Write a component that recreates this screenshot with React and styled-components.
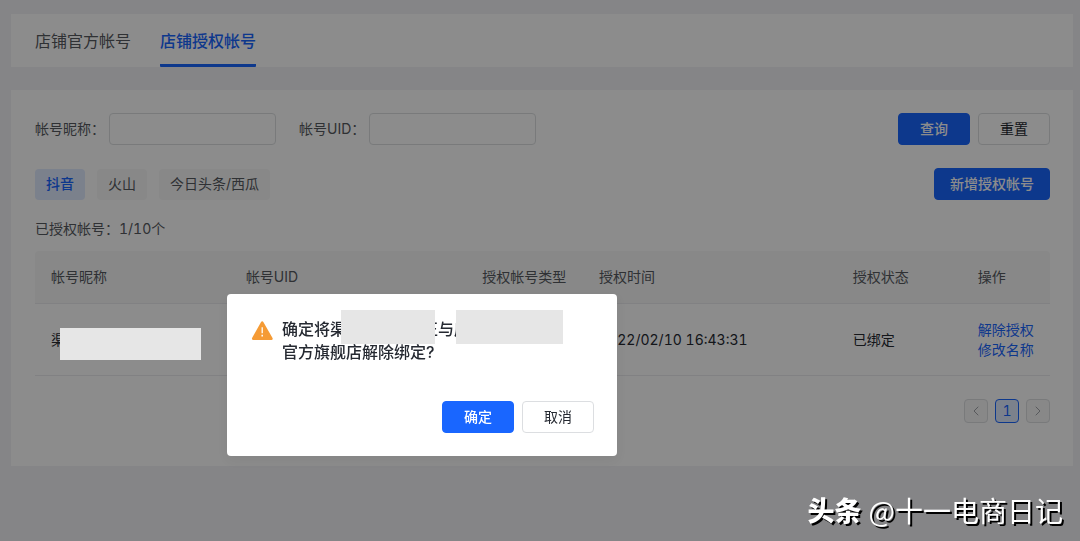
import { ChevronLeft, ChevronRight } from "lucide-react";
import styled, { createGlobalStyle, css, ThemeProvider } from "styled-components";

const theme = {
  bg: "#f2f3f6",
  card: "#ffffff",
  soft: "#f7f8f8",
  border: "#dcdee1",
  line: "#ebecef",
  primary: "#1966ff",
  primarySoft: "#e0ebff",
  text: "#252931",
  textSoft: "#565960",
  mask: "#e6e6e6",
};

const GlobalStyle = createGlobalStyle`
  * {
    box-sizing: border-box;
  }
  body {
    margin: 0;
    background-color: ${theme.bg};
    color: ${theme.text};
    font-family: Inter, "Noto Sans CJK SC", sans-serif;
    font-size: 14px;
    font-variant-numeric: tabular-nums;
    line-height: 20px;
  }
  button, input {
    font: inherit;
    color: inherit;
  }
`;

const Page = styled.main`
  display: flex;
  flex-direction: column;
  gap: 23px;
  padding: 14px 7px 24px 11px;
`;

const Tabs = styled.nav`
  display: flex;
  gap: 29px;
  padding: 0 24px;
  background-color: ${({ theme }) => theme.card};
`;

const Tab = styled.button`
  padding: 15px 0 11px;
  border: none;
  border-bottom: 3px solid transparent;
  background-color: transparent;
  color: ${({ theme }) => theme.textSoft};
  font-size: 16px;
  line-height: 24px;
  cursor: pointer;
  ${({ $active, theme }) =>
    $active &&
    css`
      color: ${theme.primary};
      border-bottom-color: ${theme.primary};
      border-radius: 1px;
      font-weight: 500;
    `}
`;

const Card = styled.section`
  padding: 23px 23px 43px 24px;
  background-color: ${({ theme }) => theme.card};
`;

const Row = styled.div`
  display: flex;
  align-items: center;
  justify-content: space-between;
`;

const Filters = styled.form`
  display: flex;
  align-items: center;
  gap: 23px;
`;

const Field = styled.div`
  display: flex;
  align-items: center;
  gap: 4px;
`;

const Label = styled.label`
  color: ${({ theme }) => theme.textSoft};
`;

const Input = styled.input`
  width: 167px;
  height: 32px;
  padding: 0 12px;
  border: 1px solid ${({ theme }) => theme.border};
  border-radius: 4px;
  outline: none;
  background-color: transparent;
`;

const Actions = styled.div`
  display: flex;
  justify-content: flex-end;
  gap: 8px;
`;

const Button = styled.button`
  min-width: 72px;
  height: 32px;
  padding: 0 15px;
  border: 1px solid ${({ theme }) => theme.border};
  border-radius: 4px;
  background-color: ${({ theme }) => theme.card};
  cursor: pointer;
  ${({ $primary, theme }) =>
    $primary &&
    css`
      border-color: ${theme.primary};
      background-color: ${theme.primary};
      color: #fff;
      font-weight: 500;
    `}
`;

const Toolbar = styled(Row)`
  margin-top: 23px;
`;

const Tags = styled.div`
  display: flex;
  gap: 12px;
`;

const Tag = styled.button`
  height: 31px;
  padding: 0 11px;
  border: none;
  border-radius: 4px;
  background-color: ${({ theme }) => theme.soft};
  color: ${({ theme }) => theme.textSoft};
  cursor: pointer;
  ${({ $active, theme }) =>
    $active &&
    css`
      background-color: ${theme.primarySoft};
      color: ${theme.primary};
      font-weight: 500;
    `}
`;

const Count = styled.p`
  margin: 19px 0 12px;
  color: ${({ theme }) => theme.textSoft};
`;

const Table = styled.table`
  width: 100%;
  table-layout: fixed;
  border-collapse: separate;
  border-spacing: 0;
`;

const Th = styled.th`
  width: ${({ $width }) => $width};
  height: 53px;
  padding: 0 16px;
  border-bottom: 1px solid ${({ theme }) => theme.line};
  background-color: ${({ theme }) => theme.soft};
  color: ${({ theme }) => theme.textSoft};
  font-weight: 400;
  text-align: left;
  white-space: nowrap;
  &:first-child {
    border-top-left-radius: 4px;
  }
  &:last-child {
    border-top-right-radius: 4px;
  }
`;

const Td = styled.td`
  height: 72px;
  padding: 0 16px;
  border-bottom: 1px solid ${({ theme }) => theme.line};
  white-space: nowrap;
`;

const Link = styled.a`
  display: block;
  color: ${({ theme }) => theme.primary};
  text-decoration: none;
`;

const Masked = styled.div`
  display: flex;
  align-items: center;
`;

const NameMask = styled.span`
  position: relative;
  z-index: 2;
  width: 141px;
  height: 32px;
  margin: 8px 0 0 -5px;
  background-color: ${({ theme }) => theme.mask};
`;

const Pagination = styled.nav`
  display: flex;
  justify-content: flex-end;
  gap: 7px;
  margin-top: 23px;
`;

const PageButton = styled.button`
  display: flex;
  align-items: center;
  justify-content: center;
  width: 24px;
  height: 24px;
  padding: 0;
  border: 1px solid ${({ theme }) => theme.border};
  border-radius: 4px;
  background-color: ${({ theme }) => theme.soft};
  color: #a0a3a8;
  ${({ $active, theme }) =>
    $active &&
    css`
      border-color: ${theme.primary};
      background-color: ${theme.primarySoft};
      color: ${theme.primary};
    `}
`;

const Overlay = styled.div`
  position: fixed;
  inset: 0;
  z-index: 1;
  background-color: rgba(0, 0, 0, 0.45);
`;

const Dialog = styled.div`
  position: absolute;
  top: 294px;
  left: 227px;
  z-index: 3;
  width: 390px;
  padding: 24px 23px 23px 24px;
  border-radius: 4px;
  background-color: ${({ theme }) => theme.card};
  box-shadow: 0 4px 12px rgba(0, 0, 0, 0.05);
`;

const DialogBody = styled.div`
  display: flex;
  gap: 8px;
  margin-bottom: 37px;
`;

const WarningIcon = styled.svg`
  flex: none;
  width: 23px;
  height: 23px;
  margin-top: 1px;
`;

const Title = styled.h2`
  margin: 0;
  font-size: 16px;
  font-weight: 500;
  line-height: 23px;
`;

const TitleLine = styled.span`
  display: flex;
  align-items: center;
  height: 23px;
  white-space: nowrap;
`;

const TitleMask = styled.span`
  position: relative;
  flex: none;
  width: ${({ $width }) => $width};
  height: 34px;
  margin: ${({ $margin }) => $margin};
  background-color: ${({ theme }) => theme.mask};
`;

const Watermark = styled.div`
  position: fixed;
  right: 17px;
  bottom: 11px;
  z-index: 4;
  display: flex;
  align-items: center;
  gap: 7px;
  color: #fff;
  font-family: "Noto Sans CJK SC", sans-serif;
  font-size: 28px;
  line-height: 40px;
  text-shadow: 2px 2px 0 #000;
`;

const Brand = styled.strong`
  font-size: 27px;
  font-weight: 900;
`;

const columns = [
  ["帐号昵称", "19.2%"],
  ["帐号UID", "23.3%"],
  ["授权帐号类型", "11.5%"],
  ["授权时间", "25%"],
  ["授权状态", "12.3%"],
  ["操作", "8.7%"],
];

function AccountTable() {
  return (
    <Table>
      <thead>
        <tr>
          {columns.map(([name, width]) => (
            <Th key={name} $width={width}>
              {name}
            </Th>
          ))}
        </tr>
      </thead>
      <tbody>
        <tr>
          <Td>
            <Masked>
              渠<NameMask />
            </Masked>
          </Td>
          <Td />
          <Td />
          <Td>2022/02/10 16:43:31</Td>
          <Td>已绑定</Td>
          <Td>
            <Link href="#unbind">解除授权</Link>
            <Link href="#rename">修改名称</Link>
          </Td>
        </tr>
      </tbody>
    </Table>
  );
}

function ConfirmDialog() {
  return (
    <Dialog role="dialog" aria-modal="true" aria-labelledby="confirm-title">
      <DialogBody>
        <WarningIcon viewBox="0 0 23 23" aria-hidden="true">
          <path
            d="M11.2 3.6 2.2 19.7h18.2Z"
            fill="#f59b35"
            stroke="#f59b35"
            strokeWidth="2.6"
            strokeLinejoin="round"
          />
          <path d="M11.2 8.2v6" stroke="#fff" strokeWidth="1.3" />
          <path d="M11.2 15.8v1.6" stroke="#fff" strokeWidth="1.5" />
        </WarningIcon>
        <Title id="confirm-title">
          <TitleLine>
            确定将渠
            <TitleMask $width="94px" $margin="0 -13px 6px -5px" />
            正与店
            <TitleMask $width="107px" $margin="0 0 6px -14px" />
          </TitleLine>
          官方旗舰店解除绑定?
        </Title>
      </DialogBody>
      <Actions>
        <Button type="button" $primary>
          确定
        </Button>
        <Button type="button">取消</Button>
      </Actions>
    </Dialog>
  );
}

function App() {
  return (
    <ThemeProvider theme={theme}>
      <GlobalStyle />
      <Page>
        <Tabs>
          <Tab type="button">店铺官方帐号</Tab>
          <Tab type="button" $active>
            店铺授权帐号
          </Tab>
        </Tabs>
        <Card>
          <Row>
            <Filters id="filters">
              <Field>
                <Label htmlFor="nickname">帐号昵称：</Label>
                <Input id="nickname" type="text" />
              </Field>
              <Field>
                <Label htmlFor="uid">帐号UID：</Label>
                <Input id="uid" type="text" />
              </Field>
            </Filters>
            <Actions>
              <Button type="submit" form="filters" $primary>
                查询
              </Button>
              <Button type="reset" form="filters">
                重置
              </Button>
            </Actions>
          </Row>
          <Toolbar>
            <Tags>
              <Tag type="button" $active>
                抖音
              </Tag>
              <Tag type="button">火山</Tag>
              <Tag type="button">今日头条/西瓜</Tag>
            </Tags>
            <Button type="button" $primary>
              新增授权帐号
            </Button>
          </Toolbar>
          <Count>已授权帐号：1/10个</Count>
          <AccountTable />
          <Pagination>
            <PageButton type="button" aria-label="上一页" disabled>
              <ChevronLeft size={16} strokeWidth={1.5} />
            </PageButton>
            <PageButton type="button" $active>
              1
            </PageButton>
            <PageButton type="button" aria-label="下一页" disabled>
              <ChevronRight size={16} strokeWidth={1.5} />
            </PageButton>
          </Pagination>
        </Card>
      </Page>
      <Overlay />
      <ConfirmDialog />
      <Watermark>
        <Brand>头条</Brand>
        <span>@十一电商日记</span>
      </Watermark>
    </ThemeProvider>
  );
}

export default App;
